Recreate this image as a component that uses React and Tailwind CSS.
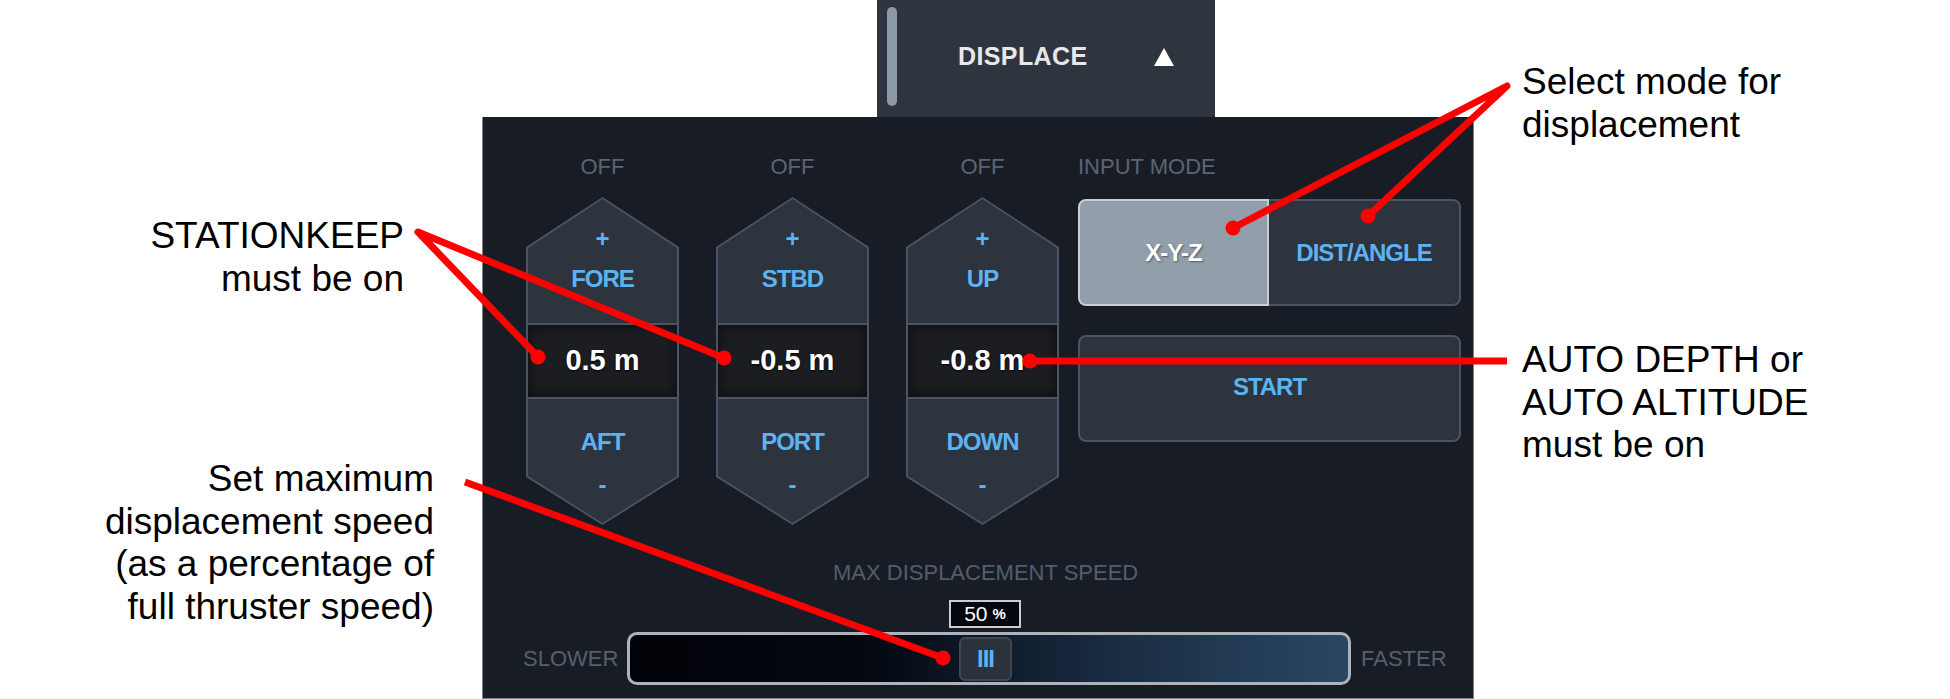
const F = "font-['Liberation_Sans',Arial,sans-serif]";

function HexControl({ top, value, bottom }) {
  return (
    <div className="flex flex-col items-center w-[153px]">
      <div className="text-[22px] leading-[26px] text-[#5b6574]">OFF</div>
      <div className="mt-[17px] w-[153px] h-[328px] bg-[#4a5464] p-[2px] [clip-path:polygon(50%_0,100%_50px,100%_calc(100%_-_48px),50%_100%,0_calc(100%_-_48px),0_50px)]">
        <div className="h-full bg-[#2e343e] flex flex-col [clip-path:polygon(50%_0,100%_49px,100%_calc(100%_-_47px),50%_100%,0_calc(100%_-_47px),0_49px)]">
          <div className="h-[124px] flex flex-col items-center pt-[28px] text-[#5cb3f2] font-bold text-[24px] leading-[24px]">
            <div>+</div>
            <div className="mt-[16px] tracking-[-1px]">{top}</div>
          </div>
          <div className="h-[76px] border-y-2 border-[#4a5464] bg-[#1b1d21] shadow-[inset_0_0_14px_rgba(0,0,0,0.6)] flex items-center justify-center text-[29px] font-bold text-white [text-shadow:0_1px_2px_#000]">
            {value}
          </div>
          <div className="flex-1 flex flex-col items-center pt-[31px] text-[#5cb3f2] font-bold text-[24px] leading-[24px]">
            <div className="tracking-[-1px]">{bottom}</div>
            <div className="mt-[19px]">-</div>
          </div>
        </div>
      </div>
    </div>
  );
}

export default function App() {
  return (
    <div className={`relative w-[1950px] h-[699px] bg-white flex overflow-hidden ${F}`}>
      {/* Left annotations */}
      <div className="w-[482px] flex flex-col items-end text-right text-[37px] leading-[42.5px] text-black">
        <div className="mt-[215px] pr-[78px]">
          STATIONKEEP
          <br />
          must be on
        </div>
        <div className="mt-[158px] pr-[48px]">
          Set maximum
          <br />
          displacement speed
          <br />
          (as a percentage of
          <br />
          full thruster speed)
        </div>
      </div>

      {/* Middle UI */}
      <div className="w-[992px] flex flex-col">
        <div className="ml-[395px] w-[338px] h-[117px] bg-[#2f353f] flex items-center pb-[3px]">
          <div className="self-start mt-[7px] ml-[10px] w-[10px] h-[99px] rounded-full bg-[#8d99a7]" />
          <span className="ml-[61px] text-[25px] font-bold text-[#e8e8e8] tracking-[0.4px]">DISPLACE</span>
          <svg className="ml-[66px]" width="20" height="18" viewBox="0 0 20 18">
            <polygon points="10,0 20,18 0,18" fill="#ffffff" />
          </svg>
        </div>

        <div className="w-[992px] h-[582px] bg-[#181d25] border-x border-b border-[#7d838a] flex flex-col pt-[37px]">
          <div className="flex items-start pl-[43px]">
            <div className="flex gap-[37px]">
              <HexControl top="FORE" value="0.5 m" bottom="AFT" />
              <HexControl top="STBD" value="-0.5 m" bottom="PORT" />
              <HexControl top="UP" value="-0.8 m" bottom="DOWN" />
            </div>
            <div className="ml-[19px] w-[383px] flex flex-col">
              <div className="text-[22px] leading-[26px] text-[#5b6574]">INPUT MODE</div>
              <div className="mt-[19px] h-[107px] flex">
                <div className="w-[191px] h-full bg-[#939eab] border-2 border-[#c9ced3] rounded-l-[8px] flex items-center justify-center text-[24px] font-bold text-white tracking-[-1px] [text-shadow:1px_1px_2px_rgba(0,0,0,0.45)]">
                  X-Y-Z
                </div>
                <div className="flex-1 h-full bg-[#2e343e] border-2 border-l-0 border-[#4a5464] rounded-r-[8px] flex items-center justify-center text-[24px] font-bold text-[#5cb3f2] tracking-[-1px]">
                  DIST/ANGLE
                </div>
              </div>
              <div className="mt-[29px] h-[107px] bg-[#2e343e] border-2 border-[#4a5464] rounded-[8px] flex items-center justify-center pb-[3px] text-[24px] font-bold text-[#5cb3f2] tracking-[-1px]">
                START
              </div>
            </div>
          </div>

          <div className="mt-[35px] pl-[350px] text-[22px] leading-[26px] text-[#535e6c]">MAX DISPLACEMENT SPEED</div>

          <div className="mt-[14px] pl-[466px] flex">
            <div className="w-[72px] h-[28px] border-2 border-[#c9cdd2] bg-[#03060c] flex items-center justify-center text-white">
              <span className="text-[21px] leading-[24px]">50</span>
              <span className="ml-[5px] text-[15px] font-bold leading-[24px]">%</span>
            </div>
          </div>

          <div className="mt-[4px] pl-[40px] flex items-center">
            <div className="w-[104px] text-[22px] leading-[26px] text-[#56606c]">SLOWER</div>
            <div className="w-[724px] h-[53px] border-[3px] border-[#aeb3b9] rounded-[10px] bg-[linear-gradient(to_right,#000207_0%,#03070f_32%,#0e1a2b_50%,#1b2f45_70%,#2a4762_100%)] flex items-center">
              <div className="ml-[329px] w-[53px] h-[44px] bg-[#2b323c] border-2 border-[#3f4753] rounded-[6px] flex items-center justify-center text-[24px] leading-[24px] font-bold text-[#5cb3f2] tracking-[-1px]">
                III
              </div>
            </div>
            <div className="ml-[10px] text-[22px] leading-[26px] text-[#56606c]">FASTER</div>
          </div>
        </div>
      </div>

      {/* Right annotations */}
      <div className="flex-1 flex flex-col pl-[48px] text-[37px] leading-[42.5px] text-black">
        <div className="mt-[61px]">
          Select mode for
          <br />
          displacement
        </div>
        <div className="mt-[193px]">
          AUTO DEPTH or
          <br />
          AUTO ALTITUDE
          <br />
          must be on
        </div>
      </div>

      {/* Red callout lines */}
      <svg className="absolute inset-0 pointer-events-none" width="1950" height="699" viewBox="0 0 1950 699">
        <g stroke="#ff0000" strokeWidth="7" fill="none" strokeLinejoin="round" strokeLinecap="butt">
          <polyline points="538,357 418,232 724,358" />
          <line x1="465" y1="482" x2="943" y2="658" />
          <polyline points="1233,228 1507,86 1368,216" />
          <line x1="1030" y1="361" x2="1507" y2="361" />
        </g>
        <g fill="#ff0000">
          <circle cx="538" cy="357" r="7.5" />
          <circle cx="724" cy="358" r="7.5" />
          <circle cx="943" cy="658" r="7.5" />
          <circle cx="1233" cy="228" r="7.5" />
          <circle cx="1368" cy="216" r="7.5" />
          <circle cx="1030" cy="361" r="7.5" />
        </g>
      </svg>
    </div>
  );
}
